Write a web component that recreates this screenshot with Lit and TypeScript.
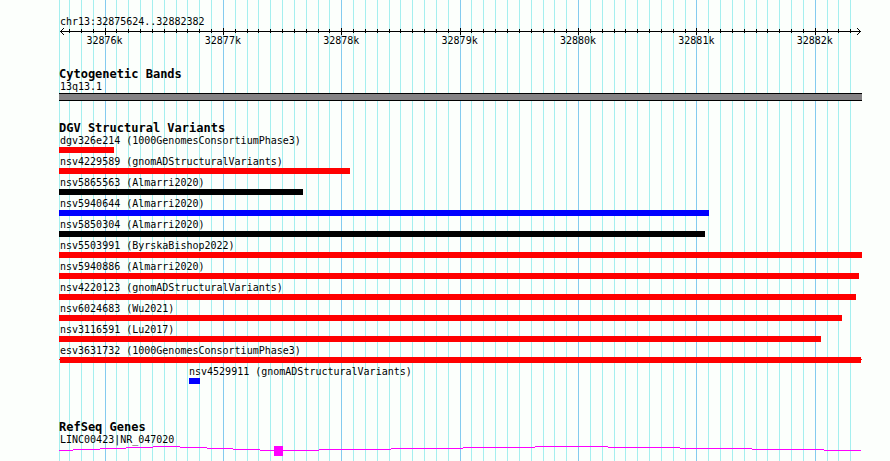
import { LitElement, html, svg, css } from "lit";
import { customElement } from "lit/decorators.js";
import { styleMap } from "lit/directives/style-map.js";

const REGION_START = 32875624;
const REGION_END = 32882382;
const SPAN = REGION_END - REGION_START;

/** Position of a coordinate as a share of the plotted region. */
const share = (bp: number) => `${((bp - REGION_START) / SPAN) * 100}%`;

interface Variant {
  label: string;
  color: string;
  /** start and end as percentages of the plotted region */
  from: number;
  to: number;
  whiskers?: boolean;
}

const RED = "#ff0000";
const BLUE = "#0000ff";
const BLACK = "#000000";

const VARIANTS: Variant[] = [
  { label: "dgv326e214 (1000GenomesConsortiumPhase3)", color: RED, from: -0.125, to: 6.75 },
  { label: "nsv4229589 (gnomADStructuralVariants)", color: RED, from: -0.125, to: 36.25 },
  { label: "nsv5865563 (Almarri2020)", color: BLACK, from: -0.125, to: 30.375 },
  { label: "nsv5940644 (Almarri2020)", color: BLUE, from: -0.125, to: 81.125 },
  { label: "nsv5850304 (Almarri2020)", color: BLACK, from: -0.125, to: 80.625 },
  { label: "nsv5503991 (ByrskaBishop2022)", color: RED, from: -0.125, to: 100.25 },
  { label: "nsv5940886 (Almarri2020)", color: RED, from: -0.125, to: 99.875 },
  { label: "nsv4220123 (gnomADStructuralVariants)", color: RED, from: -0.125, to: 99.5 },
  { label: "nsv6024683 (Wu2021)", color: RED, from: -0.125, to: 97.75 },
  { label: "nsv3116591 (Lu2017)", color: RED, from: -0.125, to: 95.125 },
  { label: "esv3631732 (1000GenomesConsortiumPhase3)", color: RED, from: 0, to: 100.125, whiskers: true },
  { label: "nsv4529911 (gnomADStructuralVariants)", color: BLUE, from: 16.125, to: 17.5 },
];

/** Intron line: [start %, end %, height step]. */
const INTRON: [number, number, number][] = [
  [-0.125, 1.625, 4], [1.625, 5, 3], [5, 8.25, 2], [8.25, 11.625, 1], [11.625, 15, 0],
  [15, 18.375, 1], [18.375, 21.625, 2], [21.625, 25, 3], [25, 26.75, 4],
  [27.875, 32.375, 4], [32.375, 41.375, 3], [41.375, 50.375, 2], [50.375, 59.375, 1],
  [59.375, 68.5, 0], [68.5, 77.5, 1], [77.5, 86.5, 2], [86.5, 95.5, 3], [95.5, 100.125, 4],
];

const TICKS: number[] = [];
for (let bp = 32875700; bp < REGION_END - 50; bp += 100) TICKS.push(bp);
const isMajor = (bp: number) => bp % 1000 === 0;

@customElement("app-root")
export class AppRoot extends LitElement {
  static styles = css`
    :host {
      display: block;
      min-height: 100vh;
      background: #fcfffc;
      color: #000;
      font: 10px/12px "DejaVu Sans Mono", monospace;
    }
    .browser {
      position: relative;
      box-sizing: border-box;
      min-height: 100vh;
      padding: 16px 30px 5px 60px;
      overflow: hidden;
    }
    .grid {
      position: absolute;
      inset: 0 30px 0 60px;
    }
    .line {
      position: absolute;
      top: 0;
      bottom: 0;
      width: 1px;
      background: #a5efef;
    }
    .line.major {
      background: #84cbef;
    }
    .line.edge {
      left: -1px;
    }
    .content {
      position: relative;
    }
    .region,
    .label,
    h2 {
      margin: 0;
      white-space: nowrap;
    }
    h2 {
      margin-left: -1px;
      font-size: 12px;
      line-height: 14px;
    }
    .ruler {
      position: relative;
      height: 19px;
    }
    .axis {
      position: absolute;
      top: 3px;
      left: 0;
      right: -1px;
      height: 1px;
      background: #000;
    }
    .arrow {
      position: absolute;
      top: 0;
      width: 4px;
      height: 7px;
    }
    .arrow.start {
      left: 0;
    }
    .arrow.end {
      right: -1px;
    }
    .tick {
      position: absolute;
      top: 1px;
      width: 1px;
      height: 4px;
      background: #000;
    }
    .tick.major {
      top: 0;
      height: 7px;
    }
    .number {
      position: absolute;
      top: 7px;
      width: 38px;
      margin-left: -19px;
      text-align: center;
    }
    section {
      margin-top: 20px;
    }
    .band {
      box-sizing: border-box;
      height: 8px;
      margin: 0 -2px 0 -1px;
      border: solid #000;
      border-width: 1px 0;
      background: #848284;
    }
    ul {
      margin: 0;
      padding: 0;
      list-style: none;
    }
    .variant {
      padding-bottom: 3px;
    }
    .lane {
      position: relative;
      height: 6px;
    }
    .bar {
      position: absolute;
      top: 0;
      bottom: 0;
    }
    .whisker {
      position: absolute;
      top: 2px;
      left: -1px;
      right: -2px;
      height: 1px;
      background: #ff0000;
    }
    .genes {
      margin-top: 33px;
    }
    .transcript {
      display: block;
      width: 100%;
      height: 10px;
      overflow: visible;
      fill: #ff00ff;
      shape-rendering: crispEdges;
    }
  `;

  private renderRuler() {
    return html`
      <div class="ruler">
        <div class="axis"></div>
        <svg class="arrow start" viewBox="0 0 4 7" shape-rendering="crispEdges">
          <path d="M3 0h1v1h-1zM2 1h1v1h-1zM1 2h1v1h-1zM0 3h1v1h-1zM1 4h1v1h-1zM2 5h1v1h-1zM3 6h1v1h-1z" />
        </svg>
        <svg class="arrow end" viewBox="0 0 4 7" shape-rendering="crispEdges">
          <path d="M0 0h1v1h-1zM1 1h1v1h-1zM2 2h1v1h-1zM3 3h1v1h-1zM2 4h1v1h-1zM1 5h1v1h-1zM0 6h1v1h-1z" />
        </svg>
        ${TICKS.map(
          (bp) => html`<div class="tick ${isMajor(bp) ? "major" : ""}" style=${styleMap({ left: share(bp) })}></div>`
        )}
        ${TICKS.filter(isMajor).map(
          (bp) => html`<div class="number" style=${styleMap({ left: share(bp) })}>${bp / 1000}k</div>`
        )}
      </div>
    `;
  }

  private renderVariant(v: Variant) {
    const indent = `${Math.max(v.from, 0)}%`;
    return html`
      <li class="variant">
        <p class="label" style=${styleMap({ "margin-left": indent })}>${v.label}</p>
        <div class="lane">
          ${v.whiskers ? html`<div class="whisker"></div>` : ""}
          <div
            class="bar"
            style=${styleMap({ left: `${v.from}%`, width: `${v.to - v.from}%`, background: v.color })}
          ></div>
        </div>
      </li>
    `;
  }

  render() {
    return html`
      <main class="browser">
        <div class="grid">
          <div class="line edge"></div>
          ${TICKS.map(
            (bp) => html`<div class="line ${isMajor(bp) ? "major" : ""}" style=${styleMap({ left: share(bp) })}></div>`
          )}
        </div>
        <div class="content">
          <p class="region">chr13:${REGION_START}..${REGION_END}</p>
          ${this.renderRuler()}
          <section>
            <h2>Cytogenetic Bands</h2>
            <p class="label">13q13.1</p>
            <div class="band"></div>
          </section>
          <section>
            <h2>DGV Structural Variants</h2>
            <ul>
              ${VARIANTS.map((v) => this.renderVariant(v))}
            </ul>
          </section>
          <section class="genes">
            <h2>RefSeq Genes</h2>
            <p class="label">LINC00423|NR_047020</p>
            <svg class="transcript" role="img" aria-label="Transcript NR_047020">
              ${INTRON.map(
                ([from, to, y]) => svg`<rect x="${from}%" y=${y} width="${to - from}%" height="1" />`
              )}
              <rect x="26.75%" y="0" width="9" height="10" />
            </svg>
          </section>
        </div>
      </main>
    `;
  }
}
